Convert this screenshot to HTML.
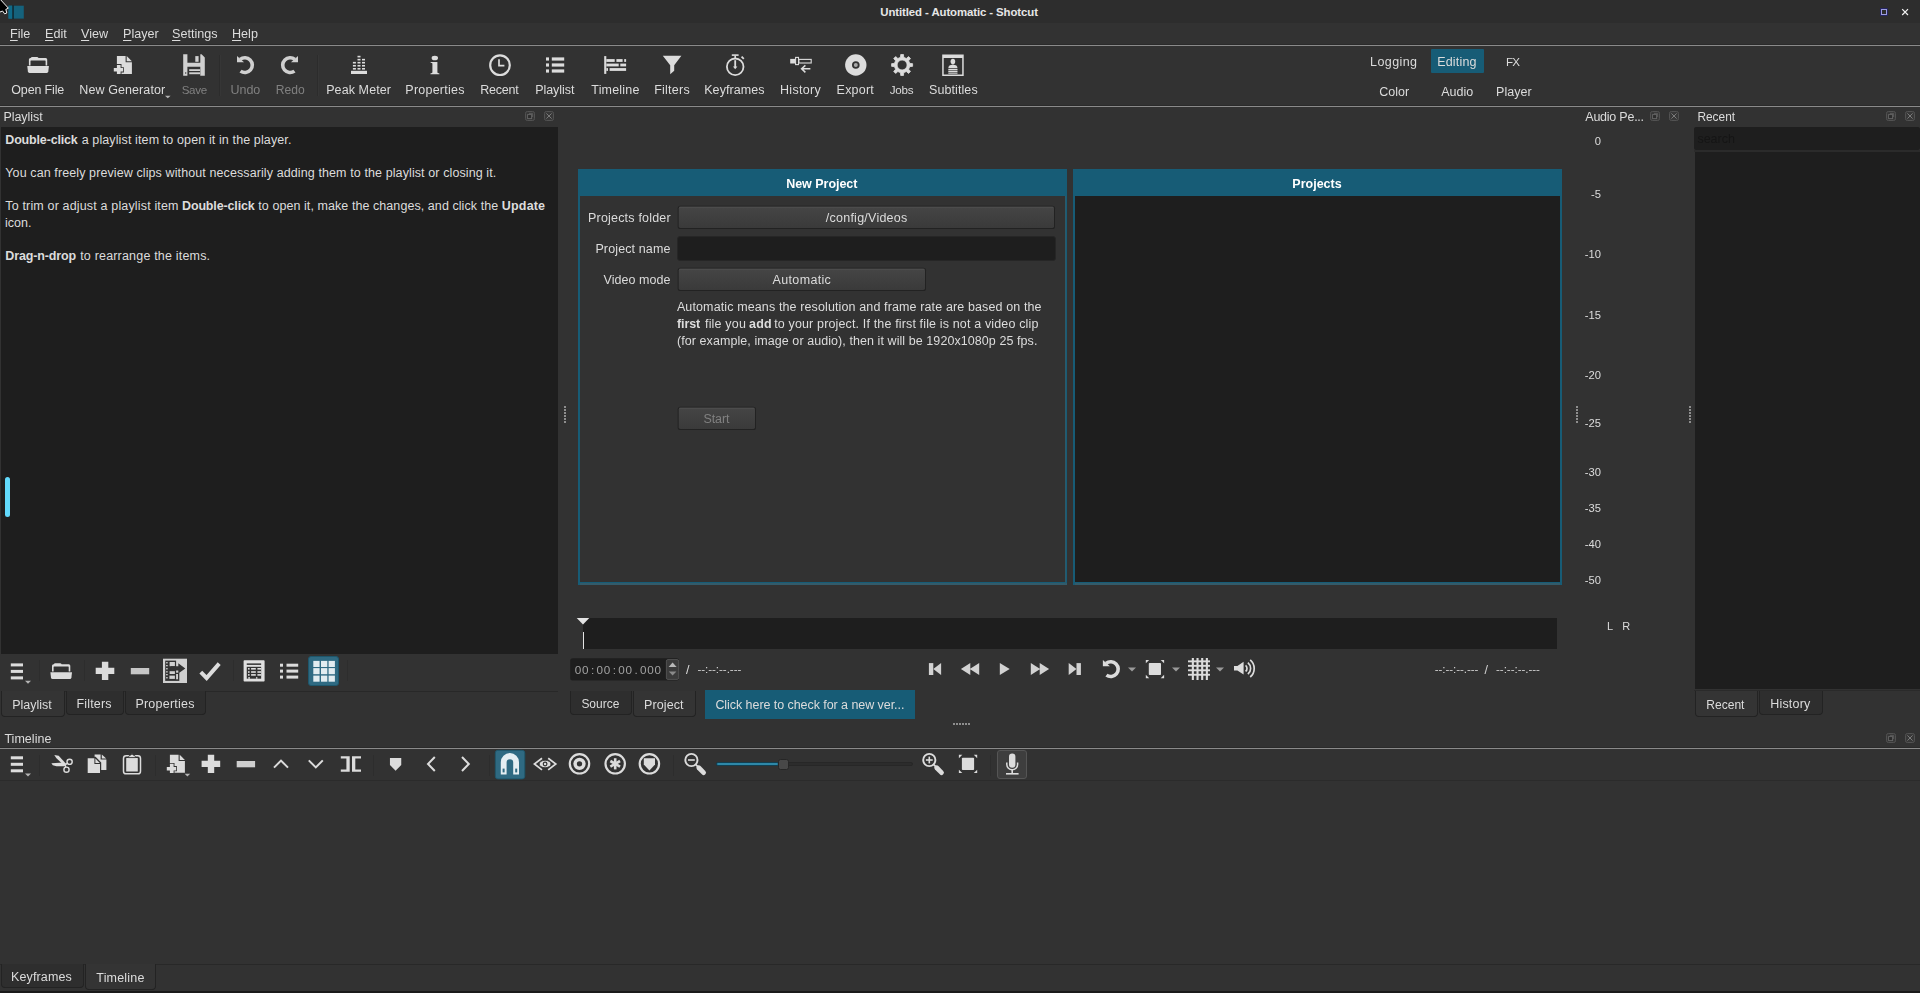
<!DOCTYPE html>
    <html lang="en"><head><meta charset="utf-8"><title>Untitled - Automatic - Shotcut</title>
    <style>
    html,body{margin:0;padding:0;}
    body{width:1920px;height:993px;overflow:hidden;background:#323232;font-family:"Liberation Sans",sans-serif;font-size:12.5px;color:#dcdcdc;position:relative;}
    #app{filter:grayscale(0);position:absolute;left:0;top:0;width:1920px;height:993px;overflow:hidden;}
    #app div,#app svg{position:absolute;box-sizing:border-box;}
    #app svg{overflow:visible;}
    .t{white-space:nowrap;}
    u{text-decoration:underline;text-underline-offset:2px;text-decoration-thickness:1px;}
    </style></head><body><div id="app">
    <div style="left:0px;top:0px;width:1920px;height:23px;background:#2d2d2d;"></div>
<div class="t" style="top:7.12px;font-size:11.4px;color:#e6e6e6;line-height:1;font-weight:bold;letter-spacing:-0.091px;left:880.30px;">Untitled - Automatic - Shotcut</div>
<div class="t" style="top:28.03px;font-size:12.6px;color:#dcdcdc;line-height:1;left:10.00px;"><u>F</u>ile</div>
<div class="t" style="top:28.03px;font-size:12.6px;color:#dcdcdc;line-height:1;left:45.00px;"><u>E</u>dit</div>
<div class="t" style="top:28.03px;font-size:12.6px;color:#dcdcdc;line-height:1;left:81.00px;"><u>V</u>iew</div>
<div class="t" style="top:28.03px;font-size:12.6px;color:#dcdcdc;line-height:1;left:123.00px;"><u>P</u>layer</div>
<div class="t" style="top:28.03px;font-size:12.6px;color:#dcdcdc;line-height:1;left:172.00px;"><u>S</u>ettings</div>
<div class="t" style="top:28.03px;font-size:12.6px;color:#dcdcdc;line-height:1;left:232.00px;"><u>H</u>elp</div>
<div style="left:0px;top:44px;width:1920px;height:1px;background:#2a2a2a;"></div>
<div style="left:0px;top:45px;width:1920px;height:1px;background:#8a8a8a;"></div>
<div class="t" style="top:84.02px;font-size:12.5px;color:#dcdcdc;line-height:1;letter-spacing:-0.155px;left:11.30px;">Open File</div>
<div class="t" style="top:84.02px;font-size:12.5px;color:#dcdcdc;line-height:1;letter-spacing:0.092px;left:79.30px;">New Generator</div>
<div class="t" style="top:84.03px;font-size:11.62px;color:#808080;line-height:1;letter-spacing:-0.347px;left:181.70px;">Save</div>
<div class="t" style="top:84.02px;font-size:12.5px;color:#808080;line-height:1;letter-spacing:-0.044px;left:230.50px;">Undo</div>
<div class="t" style="top:84.02px;font-size:12.1px;color:#808080;line-height:1;left:275.73px;">Redo</div>
<div class="t" style="top:84.02px;font-size:12.5px;color:#dcdcdc;line-height:1;letter-spacing:0.094px;left:326.20px;">Peak Meter</div>
<div class="t" style="top:84.02px;font-size:12.5px;color:#dcdcdc;line-height:1;letter-spacing:0.242px;left:405.30px;">Properties</div>
<div class="t" style="top:84.02px;font-size:12.5px;color:#dcdcdc;line-height:1;letter-spacing:-0.247px;left:480.30px;">Recent</div>
<div class="t" style="top:84.02px;font-size:12.5px;color:#dcdcdc;line-height:1;letter-spacing:-0.046px;left:535.20px;">Playlist</div>
<div class="t" style="top:84.02px;font-size:12.5px;color:#dcdcdc;line-height:1;letter-spacing:0.183px;left:591.30px;">Timeline</div>
<div class="t" style="top:84.02px;font-size:12.5px;color:#dcdcdc;line-height:1;letter-spacing:0.237px;left:654.20px;">Filters</div>
<div class="t" style="top:84.02px;font-size:12.5px;color:#dcdcdc;line-height:1;letter-spacing:0.076px;left:704.20px;">Keyframes</div>
<div class="t" style="top:84.02px;font-size:12.5px;color:#dcdcdc;line-height:1;letter-spacing:0.293px;left:780.00px;">History</div>
<div class="t" style="top:84.02px;font-size:12.5px;color:#dcdcdc;line-height:1;letter-spacing:0.209px;left:836.60px;">Export</div>
<div class="t" style="top:84.03px;font-size:11.62px;color:#dcdcdc;line-height:1;letter-spacing:-0.241px;left:889.70px;">Jobs</div>
<div class="t" style="top:84.02px;font-size:12.5px;color:#dcdcdc;line-height:1;letter-spacing:0.076px;left:929.10px;">Subtitles</div>
<div style="left:219px;top:55px;width:1px;height:41px;background:#2c2c2c;"></div>
<div style="left:220px;top:55px;width:1px;height:41px;background:#363636;"></div>
<div style="left:317px;top:55px;width:1px;height:41px;background:#2c2c2c;"></div>
<div style="left:318px;top:55px;width:1px;height:41px;background:#363636;"></div>
<div style="left:1430.5px;top:49px;width:53.5px;height:24px;background:#175c76;border-radius:1px;"></div>
<div class="t" style="top:56.02px;font-size:12.5px;color:#dcdcdc;line-height:1;letter-spacing:0.394px;left:1370.10px;">Logging</div>
<div class="t" style="top:56.02px;font-size:12.5px;color:#dcdcdc;line-height:1;letter-spacing:0.189px;left:1437.20px;">Editing</div>
<div class="t" style="top:56.03px;font-size:11.62px;color:#dcdcdc;line-height:1;letter-spacing:-0.841px;left:1506.07px;">FX</div>
<div class="t" style="top:86.02px;font-size:12.5px;color:#dcdcdc;line-height:1;letter-spacing:-0.027px;left:1379.30px;">Color</div>
<div class="t" style="top:86.02px;font-size:12.5px;color:#dcdcdc;line-height:1;letter-spacing:-0.005px;left:1441.20px;">Audio</div>
<div class="t" style="top:86.02px;font-size:12.5px;color:#dcdcdc;line-height:1;letter-spacing:0.026px;left:1496.10px;">Player</div>
<div style="left:0px;top:105px;width:1920px;height:1px;background:#2a2a2a;"></div>
<div style="left:0px;top:106px;width:1920px;height:1px;background:#8a8a8a;"></div>
<div class="t" style="top:111.02px;font-size:12.5px;color:#dcdcdc;line-height:1;letter-spacing:-0.053px;left:3.40px;">Playlist</div>
<div style="left:1px;top:127px;width:557px;height:527px;background:#1e1e1e;"></div>
<div class="t" style="top:134.02px;font-size:12.5px;color:#dcdcdc;line-height:1;font-weight:bold;letter-spacing:-0.17px;left:5.30px;">Double-click</div>
<div class="t" style="top:134.02px;font-size:12.5px;color:#dcdcdc;line-height:1;letter-spacing:0.12px;left:81.65px;">a playlist item to open it in the player.</div>
<div class="t" style="top:167.02px;font-size:12.5px;color:#dcdcdc;line-height:1;letter-spacing:0.103px;left:5.30px;">You can freely preview clips without necessarily adding them to the playlist or closing it.</div>
<div class="t" style="top:200.02px;font-size:12.5px;color:#dcdcdc;line-height:1;letter-spacing:0.159px;left:5.30px;">To trim or adjust a playlist item</div>
<div class="t" style="top:200.02px;font-size:12.5px;color:#dcdcdc;line-height:1;font-weight:bold;letter-spacing:-0.143px;left:182.00px;">Double-click</div>
<div class="t" style="top:200.02px;font-size:12.5px;color:#dcdcdc;line-height:1;letter-spacing:0.069px;left:258.30px;">to open it, make the changes, and click the</div>
<div class="t" style="top:200.02px;font-size:12.5px;color:#dcdcdc;line-height:1;font-weight:bold;letter-spacing:0.177px;left:501.80px;">Update</div>
<div class="t" style="top:217.02px;font-size:12.5px;color:#dcdcdc;line-height:1;left:5.00px;">icon.</div>
<div class="t" style="top:250.02px;font-size:12.5px;color:#dcdcdc;line-height:1;font-weight:bold;letter-spacing:-0.128px;left:5.30px;">Drag-n-drop</div>
<div class="t" style="top:250.02px;font-size:12.5px;color:#dcdcdc;line-height:1;letter-spacing:0.187px;left:80.20px;">to rearrange the items.</div>
<div style="left:5px;top:477px;width:5px;height:40px;background:#62dafc;border-radius:2.5px;"></div>
<div style="left:39px;top:660px;width:1px;height:21px;background:#2d2d2d;"></div>
<div style="left:84px;top:660px;width:1px;height:21px;background:#2d2d2d;"></div>
<div style="left:233px;top:660px;width:1px;height:21px;background:#2d2d2d;"></div>
<div style="left:347px;top:660px;width:1px;height:21px;background:#2d2d2d;"></div>
<div style="left:308px;top:656px;width:31px;height:30px;background:#2f6a82;border:1px solid #1d566b;border-radius:3px;"></div>
<div style="left:65px;top:691px;width:493px;height:1px;background:#282828;"></div>
<div style="left:1px;top:691px;width:64px;height:26px;background:#343434;border:1px solid #232323;border-top:none;border-radius:0 0 4px 4px;"></div>
<div class="t" style="top:699.02px;font-size:12.5px;color:#dcdcdc;line-height:1;letter-spacing:-0.017px;left:12.20px;">Playlist</div>
<div style="left:66px;top:691px;width:58px;height:24px;background:#2e2e2e;border:1px solid #232323;border-top:none;border-radius:0 0 4px 4px;"></div>
<div class="t" style="top:698.02px;font-size:12.5px;color:#dcdcdc;line-height:1;letter-spacing:0.137px;left:76.60px;">Filters</div>
<div style="left:125px;top:691px;width:81px;height:24px;background:#2e2e2e;border:1px solid #232323;border-top:none;border-radius:0 0 4px 4px;"></div>
<div class="t" style="top:698.02px;font-size:12.5px;color:#dcdcdc;line-height:1;letter-spacing:0.242px;left:135.40px;">Properties</div>
<div style="left:578px;top:168.5px;width:489px;height:416.5px;background:#175c76;"></div>
<div style="left:580px;top:196px;width:484.5px;height:386.2px;background:#323232;"></div>
<div style="left:580px;top:583px;width:487px;height:2px;background:#335b6a;"></div>
<div style="left:1064.8px;top:196px;width:1.6px;height:388px;background:#2c5a6b;"></div>
<div class="t" style="top:178.02px;font-size:12.5px;color:#ffffff;line-height:1;font-weight:bold;letter-spacing:-0.029px;left:786.20px;">New Project</div>
<div style="left:1073px;top:168.5px;width:489px;height:416.5px;background:#175c76;"></div>
<div style="left:1075.2px;top:196px;width:484.8px;height:386.2px;background:#1e1e1e;"></div>
<div style="left:1075px;top:583px;width:485px;height:2px;background:#335b6a;"></div>
<div class="t" style="top:178.02px;font-size:12.5px;color:#ffffff;line-height:1;font-weight:bold;left:1317.00px;transform:translateX(-50%);">Projects</div>
<div class="t" style="top:212.02px;font-size:12.5px;color:#dcdcdc;line-height:1;letter-spacing:0.198px;left:588.00px;">Projects folder</div>
<div class="t" style="top:243.02px;font-size:12.5px;color:#dcdcdc;line-height:1;letter-spacing:0.128px;left:595.40px;">Project name</div>
<div class="t" style="top:274.02px;font-size:12.5px;color:#dcdcdc;line-height:1;letter-spacing:0.052px;left:603.50px;">Video mode</div>
<svg style="left:0;top:0" width="1920" height="993"><defs><linearGradient id="bg677205" x1="0" y1="0" x2="0" y2="1"><stop offset="0" stop-color="#454545"/><stop offset="1" stop-color="#3a3a3a"/></linearGradient></defs><rect x="677.7" y="205.7" width="377.3" height="23.3" rx="2.6" fill="#222"/><rect x="678.7" y="206.7" width="375.3" height="21.3" rx="1.8" fill="url(#bg677205)"/><rect x="679.2" y="206.7" width="374.3" height="1" fill="#525252" opacity="0.8"/></svg>
<div class="t" style="top:212.02px;font-size:12.5px;color:#dcdcdc;line-height:1;letter-spacing:0.243px;left:825.80px;">/config/Videos</div>
<div style="left:677px;top:236px;width:379px;height:25px;background:#1e1e1e;border:1px solid #262626;border-radius:3px;"></div>
<svg style="left:0;top:0" width="1920" height="993"><defs><linearGradient id="bg677267" x1="0" y1="0" x2="0" y2="1"><stop offset="0" stop-color="#454545"/><stop offset="1" stop-color="#3a3a3a"/></linearGradient></defs><rect x="677.7" y="267.7" width="248.3" height="23.3" rx="2.6" fill="#222"/><rect x="678.7" y="268.7" width="246.3" height="21.3" rx="1.8" fill="url(#bg677267)"/><rect x="679.2" y="268.7" width="245.3" height="1" fill="#525252" opacity="0.8"/></svg>
<div class="t" style="top:274.02px;font-size:12.5px;color:#dcdcdc;line-height:1;letter-spacing:0.334px;left:772.60px;">Automatic</div>
<div class="t" style="top:301.02px;font-size:12.5px;color:#dcdcdc;line-height:1;letter-spacing:0.123px;left:676.90px;">Automatic means the resolution and frame rate are based on the</div>
<div class="t" style="top:318.02px;font-size:12.5px;color:#dcdcdc;line-height:1;font-weight:bold;letter-spacing:-0.063px;left:676.90px;">first</div>
<div class="t" style="top:318.02px;font-size:12.5px;color:#dcdcdc;line-height:1;letter-spacing:0.178px;left:705.00px;">file you</div>
<div class="t" style="top:318.02px;font-size:12.5px;color:#dcdcdc;line-height:1;font-weight:bold;letter-spacing:0.156px;left:749.10px;">add</div>
<div class="t" style="top:318.02px;font-size:12.5px;color:#dcdcdc;line-height:1;letter-spacing:0.147px;left:774.20px;">to your project. If the first file is not a video clip</div>
<div class="t" style="top:335.02px;font-size:12.5px;color:#dcdcdc;line-height:1;letter-spacing:0.072px;left:677.00px;">(for example, image or audio), then it will be 1920x1080p 25 fps.</div>
<svg style="left:0;top:0" width="1920" height="993"><defs><linearGradient id="bg677406" x1="0" y1="0" x2="0" y2="1"><stop offset="0" stop-color="#454545"/><stop offset="1" stop-color="#3a3a3a"/></linearGradient></defs><rect x="677.7" y="406.7" width="78.3" height="23.3" rx="2.6" fill="#222"/><rect x="678.7" y="407.7" width="76.3" height="21.3" rx="1.8" fill="url(#bg677406)"/><rect x="679.2" y="407.7" width="75.3" height="1" fill="#525252" opacity="0.8"/></svg>
<div class="t" style="top:413.02px;font-size:12.5px;color:#808080;line-height:1;letter-spacing:-0.056px;left:703.40px;">Start</div>
<div style="left:583px;top:618px;width:974px;height:31px;background:#1e1e1e;"></div>
<div style="left:583px;top:632px;width:1.4px;height:17px;background:#e4e4e4;"></div>
<svg style="left:0;top:0" width="1920" height="993"><rect x="570.2" y="658.3" width="108.8" height="22.3" rx="2.5" fill="#1e1e1e"/><rect x="666.4" y="659.6" width="12.2" height="19.8" rx="1.5" fill="#3b3b3b" stroke="#565656" stroke-width="0.9"/></svg>
<div class="t" style="top:664.23px;font-size:11.7px;color:#a2a2a2;line-height:1;left:574.40px;"><span style="display:inline-block;width:7.26px;text-align:center">0</span><span style="display:inline-block;width:7.26px;text-align:center">0</span><span style="display:inline-block;width:7.26px;text-align:center">:</span><span style="display:inline-block;width:7.26px;text-align:center">0</span><span style="display:inline-block;width:7.26px;text-align:center">0</span><span style="display:inline-block;width:7.26px;text-align:center">:</span><span style="display:inline-block;width:7.26px;text-align:center">0</span><span style="display:inline-block;width:7.26px;text-align:center">0</span><span style="display:inline-block;width:7.26px;text-align:center">.</span><span style="display:inline-block;width:7.26px;text-align:center">0</span><span style="display:inline-block;width:7.26px;text-align:center">0</span><span style="display:inline-block;width:7.26px;text-align:center">0</span></div>
<div class="t" style="top:664.02px;font-size:12.5px;color:#dcdcdc;line-height:1;left:686.00px;">/</div>
<div class="t" style="top:663.03px;font-size:11.62px;color:#d2d2d2;line-height:1;letter-spacing:-0.044px;left:697.40px;">--:--:--.---</div>
<div class="t" style="top:663.03px;font-size:11.62px;color:#d2d2d2;line-height:1;letter-spacing:-0.071px;left:1434.70px;">--:--:--.---</div>
<div class="t" style="top:664.02px;font-size:12.5px;color:#d2d2d2;line-height:1;left:1484.60px;">/</div>
<div class="t" style="top:663.03px;font-size:11.62px;color:#d2d2d2;line-height:1;letter-spacing:-0.044px;left:1496.00px;">--:--:--.---</div>
<div style="left:570px;top:691px;width:62px;height:24px;background:#2e2e2e;border:1px solid #232323;border-top:none;border-radius:0 0 4px 4px;"></div>
<div class="t" style="top:698.03px;font-size:11.98px;color:#dcdcdc;line-height:1;left:581.40px;">Source</div>
<div style="left:633px;top:691px;width:62.5px;height:26px;background:#343434;border:1px solid #232323;border-top:none;border-radius:0 0 4px 4px;"></div>
<div class="t" style="top:699.02px;font-size:12.5px;color:#dcdcdc;line-height:1;letter-spacing:0.095px;left:644.10px;">Project</div>
<div style="left:705px;top:690px;width:210px;height:29px;background:#175c76;"></div>
<div class="t" style="top:699.02px;font-size:12.5px;color:#dcdcdc;line-height:1;letter-spacing:-0.059px;left:715.40px;">Click here to check for a new ver...</div>
<div class="t" style="top:111.02px;font-size:12.5px;color:#dcdcdc;line-height:1;letter-spacing:-0.238px;left:1585.30px;">Audio Pe...</div>
<div class="t" style="top:136.03px;font-size:11.2px;color:#dcdcdc;line-height:1;right:319.00px;">0</div>
<div class="t" style="top:189.03px;font-size:11.2px;color:#dcdcdc;line-height:1;right:319.00px;">-5</div>
<div class="t" style="top:249.03px;font-size:11.2px;color:#dcdcdc;line-height:1;right:319.00px;">-10</div>
<div class="t" style="top:310.03px;font-size:11.2px;color:#dcdcdc;line-height:1;right:319.00px;">-15</div>
<div class="t" style="top:370.03px;font-size:11.2px;color:#dcdcdc;line-height:1;right:319.00px;">-20</div>
<div class="t" style="top:418.03px;font-size:11.2px;color:#dcdcdc;line-height:1;right:319.00px;">-25</div>
<div class="t" style="top:467.03px;font-size:11.2px;color:#dcdcdc;line-height:1;right:319.00px;">-30</div>
<div class="t" style="top:503.03px;font-size:11.2px;color:#dcdcdc;line-height:1;right:319.00px;">-35</div>
<div class="t" style="top:539.03px;font-size:11.2px;color:#dcdcdc;line-height:1;right:319.00px;">-40</div>
<div class="t" style="top:575.03px;font-size:11.2px;color:#dcdcdc;line-height:1;right:319.00px;">-50</div>
<div class="t" style="top:621.03px;font-size:11px;color:#dcdcdc;line-height:1;left:1607.00px;">L</div>
<div class="t" style="top:621.03px;font-size:11px;color:#dcdcdc;line-height:1;left:1622.30px;">R</div>
<div class="t" style="top:112.03px;font-size:11.88px;color:#dcdcdc;line-height:1;left:1697.45px;">Recent</div>
<div style="left:1694px;top:127px;width:226px;height:23px;background:#1e1e1e;border-radius:2px;"></div>
<div style="left:1695px;top:152px;width:225px;height:537px;background:#1e1e1e;"></div>
<div style="left:1694px;top:150px;width:226px;height:2px;background:#2b2b2b;"></div>
<div class="t" style="top:133.02px;font-size:12.5px;color:#151515;line-height:1;left:1697.40px;">search</div>
<div style="left:1694px;top:690px;width:226px;height:1px;background:#2a2a2a;"></div>
<div style="left:1695px;top:691px;width:63px;height:26px;background:#343434;border:1px solid #232323;border-top:none;border-radius:0 0 4px 4px;"></div>
<div class="t" style="top:699.03px;font-size:12.06px;color:#dcdcdc;line-height:1;left:1706.29px;">Recent</div>
<div style="left:1759px;top:691px;width:64px;height:24px;background:#2e2e2e;border:1px solid #232323;border-top:none;border-radius:0 0 4px 4px;"></div>
<div class="t" style="top:698.02px;font-size:12.5px;color:#dcdcdc;line-height:1;letter-spacing:0.185px;left:1770.25px;">History</div>
<div class="t" style="top:733.02px;font-size:12.5px;color:#dcdcdc;line-height:1;letter-spacing:0.04px;left:4.40px;">Timeline</div>
<div style="left:0px;top:747px;width:1920px;height:1px;background:#2a2a2a;"></div>
<div style="left:0px;top:748px;width:1920px;height:1px;background:#8a8a8a;"></div>
<div style="left:0px;top:780px;width:1920px;height:1px;background:#2b2b2b;"></div>
<div style="left:39px;top:755px;width:1px;height:21px;background:#2d2d2d;"></div>
<div style="left:155px;top:755px;width:1px;height:21px;background:#2d2d2d;"></div>
<div style="left:373px;top:755px;width:1px;height:21px;background:#2d2d2d;"></div>
<div style="left:489px;top:755px;width:1px;height:21px;background:#2d2d2d;"></div>
<div style="left:673px;top:755px;width:1px;height:21px;background:#2d2d2d;"></div>
<div style="left:990px;top:755px;width:1px;height:21px;background:#2d2d2d;"></div>
<svg style="left:0;top:0" width="1920" height="993"><rect x="495.3" y="750.3" width="29.5" height="28.6" rx="2.6" fill="#2f6a82" stroke="#1d566b" stroke-width="0.9"/></svg>
<div style="left:997px;top:750px;width:30px;height:29px;background:#3e3e3e;border:1px solid #555;border-radius:3px;"></div>
<div style="left:716px;top:762px;width:197px;height:4px;background:#2c2c2c;border:1px solid #272727;border-radius:2px;"></div>
<div style="left:716px;top:762px;width:63px;height:4px;background:#2e88a8;border:1px solid #123f50;border-radius:2px;"></div>
<div style="left:778px;top:759px;width:11px;height:11px;background:#484848;border:1px solid #262626;border-radius:2.5px;"></div>
<div style="left:0px;top:964px;width:1920px;height:1px;background:#282828;"></div>
<div style="left:1px;top:964px;width:83px;height:24px;background:#2e2e2e;border:1px solid #232323;border-top:none;border-radius:0 0 4px 4px;"></div>
<div class="t" style="top:971.02px;font-size:12.5px;color:#dcdcdc;line-height:1;letter-spacing:0.114px;left:11.10px;">Keyframes</div>
<div style="left:85px;top:964px;width:71px;height:26px;background:#343434;border:1px solid #232323;border-top:none;border-radius:0 0 4px 4px;"></div>
<div class="t" style="top:972.33px;font-size:12.5px;color:#dcdcdc;line-height:1;letter-spacing:0.183px;left:96.30px;">Timeline</div>
<div style="left:0px;top:991px;width:1920px;height:2px;background:#1a1a1a;"></div>
<svg style="left:0;top:0;" width="1920" height="993" viewBox="0 0 1920 993"><rect x="8.5" y="5.7" width="15.3" height="12.9" fill="#15627c" rx="0" /><rect x="8.5" y="5.7" width="3.8" height="12.9" fill="#0f6a88" rx="0" /><rect x="12.3" y="5.2" width="1.5" height="13.9" fill="#10262e" rx="0" /><path d="M-1 -2 L8.4 8.2 L5.8 9.4 L6.8 13 L4.6 13.8 L2.6 11 L-1 12.4 Z" fill="#000" stroke="#f4f4f4" stroke-width="1" /><rect x="1880.6" y="8.6" width="6.8" height="6.8" fill="none" stroke="#25256e" stroke-width="0.8"/><rect x="1881.5" y="9.5" width="5" height="5" fill="none" stroke="#9c9ce0" stroke-width="1"/><path d="M1902.2 9.2 l5.8 5.8 M1908 9.2 l-5.8 5.8" fill="none" stroke="#f2f2f2" stroke-width="1.2" /><g transform="translate(27.3,57)"><path d="M1.6 8.4 V2.6 Q1.6 1.1 3.1 1.1 H3.4 Q3.7 0 5 0 H9.6 Q10.9 0 11.2 1.1 H18.4 Q19.9 1.1 19.9 2.6 V8.4 H18.3 V3.9 Q18.3 3.4 17.8 3.4 H3.7 Q3.2 3.4 3.2 3.9 V8.4 Z" fill="#dcdcdc" stroke="none" stroke-width="0" /><path d="M0 9.1 H21.6 L21 14.6 Q20.8 15.9 19.5 15.9 H2.1 Q0.8 15.9 0.6 14.6 Z" fill="#dcdcdc" stroke="none" stroke-width="0" /></g><g transform="translate(113.8,56)"><path d="M3.1 0 H11.8 V6.2 H18.1 V18 H7.7 V16.5 H10.1 V11.2 H7.7 V8.1 H3.1 Z" fill="#dcdcdc" stroke="none" stroke-width="0" /><path d="M12.9 0 L18.1 5.2 H12.9 Z" fill="#dcdcdc" stroke="none" stroke-width="0" /><path d="M3.1 9 H6.8 V12.1 H9.3 V15.6 H6.8 V18.1 H3.1 V15.6 H0 V12.1 H3.1 Z" fill="#dcdcdc" stroke="none" stroke-width="0" /></g><path d="M165 95.7 h5.6 l-2.8 2.6 z" fill="#b4b4b4" stroke="none" stroke-width="0" /><path d="M183.2 54.3 H187.4 V62.7 H200.3 V54.3 H201.6 L204.8 57.5 V75.7 H200.3 V66.8 H187.4 V75.7 H183.2 Z" fill="#d0d0d0" stroke="none" stroke-width="0" /><rect x="195.3" y="56.1" width="3.3" height="5.7" fill="#d0d0d0" rx="0" /><rect x="189.2" y="69.2" width="10.9" height="1.8" fill="#d0d0d0" rx="0" /><rect x="189.2" y="72.3" width="10.9" height="1.9" fill="#d0d0d0" rx="0" /><circle cx="185.7" cy="73" r="0.7" fill="#323232" stroke="none" stroke-width="0"/><g transform="translate(244.9,65.1) scale(1,1)"><path d="M-4.76 -5.67 A7.4 7.4 0 1 1 -4.35 5.99" fill="none" stroke="#d0d0d0" stroke-width="3.6" /><path d="M-7.9 -9.1 V-2.9 H-0.9 Z" fill="#d0d0d0" stroke="none" stroke-width="0" /></g><g transform="translate(290.1,65.1) scale(-1,1)"><path d="M-4.76 -5.67 A7.4 7.4 0 1 1 -4.35 5.99" fill="none" stroke="#d0d0d0" stroke-width="3.6" /><path d="M-7.9 -9.1 V-2.9 H-0.9 Z" fill="#d0d0d0" stroke="none" stroke-width="0" /></g><rect x="351" y="70.8" width="16" height="3.2" fill="#dcdcdc" rx="0" /><rect x="352.9" y="68.0" width="3" height="1.6" fill="#dcdcdc" rx="0" /><rect x="352.9" y="64.95" width="3" height="1.6" fill="#dcdcdc" rx="0" /><rect x="352.9" y="61.9" width="3" height="1.6" fill="#dcdcdc" rx="0" /><rect x="357.5" y="68.0" width="3" height="1.6" fill="#dcdcdc" rx="0" /><rect x="357.5" y="64.95" width="3" height="1.6" fill="#dcdcdc" rx="0" /><rect x="357.5" y="61.9" width="3" height="1.6" fill="#dcdcdc" rx="0" /><rect x="357.5" y="58.85" width="3" height="1.6" fill="#dcdcdc" rx="0" /><rect x="357.5" y="55.8" width="3" height="1.6" fill="#dcdcdc" rx="0" /><rect x="362.0" y="68.0" width="3" height="1.6" fill="#dcdcdc" rx="0" /><rect x="362.0" y="64.95" width="3" height="1.6" fill="#dcdcdc" rx="0" /><rect x="362.0" y="61.9" width="3" height="1.6" fill="#dcdcdc" rx="0" /><rect x="362.0" y="58.85" width="3" height="1.6" fill="#dcdcdc" rx="0" /><ellipse cx="434.8" cy="58" rx="3.2" ry="2.3" fill="#dcdcdc"/><path d="M430.6 62 H437.4 V72.6 Q437.4 73.2 439.4 73.4 V74.2 H430.4 V73.4 Q432.4 73.2 432.4 72.6 V63.6 Q432.4 63 430.6 62.8 Z" fill="#dcdcdc" stroke="none" stroke-width="0" /><circle cx="500" cy="65.2" r="9.8" fill="none" stroke="#dcdcdc" stroke-width="2.2"/><path d="M499 59.3 V65.6 H504.4" fill="none" stroke="#dcdcdc" stroke-width="1.7" /><rect x="546" y="57.4" width="3" height="3.2" fill="#dcdcdc" rx="0" /><rect x="551.8" y="57.4" width="12.4" height="3.2" fill="#dcdcdc" rx="0" /><rect x="546" y="63.4" width="3" height="3.2" fill="#dcdcdc" rx="0" /><rect x="551.8" y="63.4" width="12.4" height="3.2" fill="#dcdcdc" rx="0" /><rect x="546" y="69.4" width="3" height="3.2" fill="#dcdcdc" rx="0" /><rect x="551.8" y="69.4" width="12.4" height="3.2" fill="#dcdcdc" rx="0" /><rect x="604.2" y="56.1" width="2.1" height="17.8" fill="#dcdcdc" rx="0" /><rect x="606.3" y="59.1" width="8.400000000000091" height="2.8" fill="#dcdcdc" rx="0" /><rect x="616.4" y="59.1" width="6.2000000000000455" height="2.8" fill="#dcdcdc" rx="0" /><rect x="624.2" y="59.1" width="1.8999999999999773" height="2.8" fill="#dcdcdc" rx="0" /><rect x="606.3" y="63.6" width="12.400000000000091" height="2.8" fill="#dcdcdc" rx="0" /><rect x="620.3" y="63.6" width="5.800000000000068" height="2.8" fill="#dcdcdc" rx="0" /><rect x="606.3" y="68.1" width="1.7000000000000455" height="2.8" fill="#dcdcdc" rx="0" /><rect x="609.6" y="68.1" width="16.5" height="2.8" fill="#dcdcdc" rx="0" /><path d="M662.8 55.8 H681.4 L674.2 65.2 V70.8 L670.2 74.2 V65.2 Z" fill="#dcdcdc" stroke="none" stroke-width="0" /><circle cx="735.2" cy="66.8" r="8.3" fill="none" stroke="#dcdcdc" stroke-width="1.8"/><rect x="731.8" y="54.3" width="6.8" height="1.6" fill="#dcdcdc" rx="0" /><rect x="734.4" y="55.6" width="1.6" height="2.8" fill="#dcdcdc" rx="0" /><path d="M741.6 56.6 L743.8 58.8" fill="none" stroke="#dcdcdc" stroke-width="1.8" /><rect x="734.3" y="60.2" width="1.8" height="7" fill="#dcdcdc" rx="0" /><path d="M733 66.4 h4.4 l-2.2 2.8 z" fill="#dcdcdc" stroke="none" stroke-width="0" /><rect x="790.2" y="58.9" width="5.4" height="4.6" fill="#dcdcdc" rx="0" /><rect x="795.6" y="57.4" width="2.9" height="7.2" fill="none" stroke="#dcdcdc" stroke-width="1.1"/><rect x="798.9" y="59.4" width="12.3" height="3.6" fill="none" stroke="#dcdcdc" stroke-width="1.1"/><path d="M810.4 68.8 H802 M805.4 65.4 L801.6 68.8 L805.4 72.4" fill="none" stroke="#dcdcdc" stroke-width="1.5" /><circle cx="855.8" cy="65" r="10.7" fill="#dcdcdc" stroke="none" stroke-width="0"/><circle cx="855.8" cy="65" r="3.8" fill="#323232" stroke="none" stroke-width="0"/><circle cx="855.8" cy="65" r="2" fill="#a8a8a8" stroke="none" stroke-width="0"/><path d="M900.47 57.37 L900.73 54.49 L903.47 54.49 L903.73 57.37 L906.34 58.46 L908.56 56.60 L910.50 58.54 L908.64 60.76 L909.73 63.37 L912.61 63.63 L912.61 66.37 L909.73 66.63 L908.64 69.24 L910.50 71.46 L908.56 73.40 L906.34 71.54 L903.73 72.63 L903.47 75.51 L900.73 75.51 L900.47 72.63 L897.86 71.54 L895.64 73.40 L893.70 71.46 L895.56 69.24 L894.47 66.63 L891.59 66.37 L891.59 63.63 L894.47 63.37 L895.56 60.76 L893.70 58.54 L895.64 56.60 L897.86 58.46 Z M907.1 65 A5 5 0 1 0 897.1 65 A5 5 0 1 0 907.1 65 Z" fill="#dcdcdc" stroke="#dcdcdc" stroke-width="0.8" fill-rule="evenodd" stroke-linejoin="round"/><path d="M942.2 54.4 H963.7 V75.9 H942.2 Z M943.7 58 V74.4 H962.2 V58 Z" fill="#dcdcdc" stroke="none" stroke-width="0" fill-rule="evenodd"/><ellipse cx="952.9" cy="61.6" rx="2.3" ry="2.8" fill="#dcdcdc"/><path d="M948.3 68.2 Q948.3 64.8 952.9 64.8 Q957.5 64.8 957.5 68.2 Z" fill="#dcdcdc" stroke="none" stroke-width="0" /><rect x="948.3" y="69" width="9.2" height="1.4" fill="#dcdcdc" rx="0" /><rect x="948.3" y="71" width="9.2" height="1.2" fill="#dcdcdc" rx="0" /><rect x="948.3" y="72.7" width="9.2" height="1" fill="#dcdcdc" rx="0" /><rect x="525.5" y="111.5" width="9" height="9" rx="1.8" fill="#383838" stroke="#525252" stroke-width="1"/><rect x="544.5" y="111.5" width="9" height="9" rx="1.8" fill="#383838" stroke="#525252" stroke-width="1"/><rect x="527.6" y="114.6" width="4" height="4" fill="#2c2c2c" stroke="#666" stroke-width="0.9"/><path d="M529 113.4 h3.6 v3.6" fill="none" stroke="#5c5c5c" stroke-width="0.9" /><path d="M546.4 113.4 l5.2 5.2 M551.6 113.4 l-5.2 5.2" fill="none" stroke="#7a7a7a" stroke-width="1" /><rect x="1650.5" y="111.5" width="9" height="9" rx="1.8" fill="#383838" stroke="#525252" stroke-width="1"/><rect x="1669.5" y="111.5" width="9" height="9" rx="1.8" fill="#383838" stroke="#525252" stroke-width="1"/><rect x="1652.6" y="114.6" width="4" height="4" fill="#2c2c2c" stroke="#666" stroke-width="0.9"/><path d="M1654 113.4 h3.6 v3.6" fill="none" stroke="#5c5c5c" stroke-width="0.9" /><path d="M1671.4 113.4 l5.2 5.2 M1676.6 113.4 l-5.2 5.2" fill="none" stroke="#7a7a7a" stroke-width="1" /><rect x="1886.5" y="111.5" width="9" height="9" rx="1.8" fill="#383838" stroke="#525252" stroke-width="1"/><rect x="1905.5" y="111.5" width="9" height="9" rx="1.8" fill="#383838" stroke="#525252" stroke-width="1"/><rect x="1888.6" y="114.6" width="4" height="4" fill="#2c2c2c" stroke="#666" stroke-width="0.9"/><path d="M1890 113.4 h3.6 v3.6" fill="none" stroke="#5c5c5c" stroke-width="0.9" /><path d="M1907.4 113.4 l5.2 5.2 M1912.6 113.4 l-5.2 5.2" fill="none" stroke="#7a7a7a" stroke-width="1" /><rect x="1886.5" y="733.5" width="9" height="9" rx="1.8" fill="#383838" stroke="#525252" stroke-width="1"/><rect x="1905.5" y="733.5" width="9" height="9" rx="1.8" fill="#383838" stroke="#525252" stroke-width="1"/><rect x="1888.6" y="736.6" width="4" height="4" fill="#2c2c2c" stroke="#666" stroke-width="0.9"/><path d="M1890 735.4 h3.6 v3.6" fill="none" stroke="#5c5c5c" stroke-width="0.9" /><path d="M1907.4 735.4 l5.2 5.2 M1912.6 735.4 l-5.2 5.2" fill="none" stroke="#7a7a7a" stroke-width="1" /><rect x="564" y="406" width="2" height="2" fill="#8e8e8e" rx="0" /><rect x="564" y="409" width="2" height="2" fill="#8e8e8e" rx="0" /><rect x="564" y="412" width="2" height="2" fill="#8e8e8e" rx="0" /><rect x="564" y="415" width="2" height="2" fill="#8e8e8e" rx="0" /><rect x="564" y="418" width="2" height="2" fill="#8e8e8e" rx="0" /><rect x="564" y="421" width="2" height="2" fill="#8e8e8e" rx="0" /><rect x="1576" y="406" width="2" height="2" fill="#8e8e8e" rx="0" /><rect x="1576" y="409" width="2" height="2" fill="#8e8e8e" rx="0" /><rect x="1576" y="412" width="2" height="2" fill="#8e8e8e" rx="0" /><rect x="1576" y="415" width="2" height="2" fill="#8e8e8e" rx="0" /><rect x="1576" y="418" width="2" height="2" fill="#8e8e8e" rx="0" /><rect x="1576" y="421" width="2" height="2" fill="#8e8e8e" rx="0" /><rect x="1689" y="406" width="2" height="2" fill="#8e8e8e" rx="0" /><rect x="1689" y="409" width="2" height="2" fill="#8e8e8e" rx="0" /><rect x="1689" y="412" width="2" height="2" fill="#8e8e8e" rx="0" /><rect x="1689" y="415" width="2" height="2" fill="#8e8e8e" rx="0" /><rect x="1689" y="418" width="2" height="2" fill="#8e8e8e" rx="0" /><rect x="1689" y="421" width="2" height="2" fill="#8e8e8e" rx="0" /><rect x="953" y="723" width="2" height="2" fill="#8e8e8e" rx="0" /><rect x="956" y="723" width="2" height="2" fill="#8e8e8e" rx="0" /><rect x="959" y="723" width="2" height="2" fill="#8e8e8e" rx="0" /><rect x="962" y="723" width="2" height="2" fill="#8e8e8e" rx="0" /><rect x="965" y="723" width="2" height="2" fill="#8e8e8e" rx="0" /><rect x="968" y="723" width="2" height="2" fill="#8e8e8e" rx="0" /><rect x="10.8" y="663.4" width="12.2" height="3" fill="#dcdcdc" rx="0" /><rect x="10.8" y="669.9" width="12.2" height="3" fill="#dcdcdc" rx="0" /><rect x="10.8" y="676.4" width="12.2" height="3" fill="#dcdcdc" rx="0" /><path d="M25.0 680.6999999999999 h6 l-3 3 z" fill="#b4b4b4" stroke="none" stroke-width="0" /><g transform="translate(50.4,663.2)"><path d="M1.6 8.4 V2.6 Q1.6 1.1 3.1 1.1 H3.4 Q3.7 0 5 0 H9.6 Q10.9 0 11.2 1.1 H18.4 Q19.9 1.1 19.9 2.6 V8.4 H18.3 V3.9 Q18.3 3.4 17.8 3.4 H3.7 Q3.2 3.4 3.2 3.9 V8.4 Z" fill="#dcdcdc" stroke="none" stroke-width="0" /><path d="M0 9.1 H21.6 L21 14.6 Q20.8 15.9 19.5 15.9 H2.1 Q0.8 15.9 0.6 14.6 Z" fill="#dcdcdc" stroke="none" stroke-width="0" /></g><path d="M101.9 661.8 h6.4 v6 h6 v6.3 h-6 v6 h-6.4 v-6 h-6.2 v-6.3 h6.2 z" fill="#dcdcdc" stroke="none" stroke-width="0" /><rect x="130.8" y="668" width="18.4" height="6.3" fill="#c6c6c6" rx="0" /><rect x="163" y="658.7" width="24" height="24.3" fill="#d0d0d0" rx="0" /><rect x="165.2" y="660.6" width="10.9" height="20.3" fill="#323232" rx="0" /><rect x="176" y="672.7" width="3.3" height="8.2" fill="#323232" rx="0" /><rect x="166.1" y="662.1" width="1.6" height="1.3" fill="#d0d0d0" rx="0" /><rect x="166.1" y="665" width="1.6" height="1.3" fill="#d0d0d0" rx="0" /><rect x="166.1" y="668.1" width="1.6" height="1.3" fill="#d0d0d0" rx="0" /><rect x="166.1" y="671.2" width="1.6" height="1.3" fill="#d0d0d0" rx="0" /><rect x="166.1" y="674" width="1.6" height="1.3" fill="#d0d0d0" rx="0" /><rect x="166.1" y="677.1" width="1.6" height="1.3" fill="#d0d0d0" rx="0" /><rect x="169.6" y="662" width="5.3" height="4.2" fill="#d0d0d0" rx="0" /><rect x="169.6" y="671.2" width="5.3" height="2.8" fill="#d0d0d0" rx="0" /><rect x="169.4" y="675.6" width="5.5" height="3.3" fill="#d0d0d0" rx="0" /><rect x="176.1" y="674" width="1.9" height="5.3" fill="#d0d0d0" rx="0" /><path d="M170.8 666.2 H178.3 V663.2 L185.3 668.5 L178.3 673.6 V670.6 H170.8 Z" fill="#323232" stroke="none" stroke-width="0" /><path d="M200.8 672.2 L206.6 678 L219.2 663.6" fill="none" stroke="#dcdcdc" stroke-width="4" /><rect x="243.6" y="660.3" width="21" height="21.2" fill="#e0e0e0" rx="0.8" /><rect x="246.75" y="663.4" width="14.4" height="1.5" fill="#323232" rx="0" /><rect x="246.75" y="666.8" width="14.4" height="11.9" fill="#323232" rx="0" /><rect x="248" y="668" width="1.6" height="1.6" fill="#e0e0e0" rx="0" /><rect x="251.1" y="668" width="4.7" height="1.6" fill="#e0e0e0" rx="0" /><rect x="257.4" y="668" width="3.7" height="1.6" fill="#e0e0e0" rx="0" /><rect x="248" y="671.2" width="1.6" height="1.6" fill="#e0e0e0" rx="0" /><rect x="251.1" y="671.2" width="4.7" height="1.6" fill="#e0e0e0" rx="0" /><rect x="257.4" y="671.2" width="3.7" height="1.6" fill="#e0e0e0" rx="0" /><rect x="248" y="674.1" width="1.6" height="1.6" fill="#e0e0e0" rx="0" /><rect x="251.1" y="674.1" width="4.7" height="1.6" fill="#e0e0e0" rx="0" /><rect x="257.4" y="674.1" width="3.7" height="1.6" fill="#e0e0e0" rx="0" /><rect x="248.2" y="677.2" width="1.8" height="1.5" fill="#e0e0e0" rx="0" /><rect x="256" y="677.2" width="1.4" height="1.5" fill="#e0e0e0" rx="0" /><rect x="280" y="663.7" width="3" height="3" fill="#dcdcdc" rx="0" /><rect x="286.5" y="663.7" width="11.7" height="3" fill="#dcdcdc" rx="0" /><rect x="280" y="669.6" width="3" height="3" fill="#dcdcdc" rx="0" /><rect x="286.5" y="669.6" width="11.7" height="3" fill="#dcdcdc" rx="0" /><rect x="280" y="675.6" width="3" height="3" fill="#dcdcdc" rx="0" /><rect x="286.5" y="675.6" width="11.7" height="3" fill="#dcdcdc" rx="0" /><rect x="313.3" y="660.9" width="6.3" height="6.1" fill="#e1ecf0" rx="0" /><rect x="313.3" y="668.1" width="6.3" height="6.1" fill="#e1ecf0" rx="0" /><rect x="313.3" y="675.6" width="6.3" height="6.1" fill="#e1ecf0" rx="0" /><rect x="321" y="660.9" width="6.3" height="6.1" fill="#e1ecf0" rx="0" /><rect x="321" y="668.1" width="6.3" height="6.1" fill="#e1ecf0" rx="0" /><rect x="321" y="675.6" width="6.3" height="6.1" fill="#e1ecf0" rx="0" /><rect x="328.6" y="660.9" width="6.3" height="6.1" fill="#e1ecf0" rx="0" /><rect x="328.6" y="668.1" width="6.3" height="6.1" fill="#e1ecf0" rx="0" /><rect x="328.6" y="675.6" width="6.3" height="6.1" fill="#e1ecf0" rx="0" /><path d="M576.7 618 h12.6 l-6.3 6.4 z" fill="#e4e4e4" stroke="none" stroke-width="0" /><path d="M668.6 667 l4 -4.4 l4 4.4 z" fill="#b8b8b8" stroke="none" stroke-width="0" /><path d="M668.8 671.6 h7.6 l-3.8 4 z" fill="#8a8a8a" stroke="none" stroke-width="0" /><rect x="928.9" y="663.1" width="4.4" height="11.9" fill="#d2d2d2" rx="0" /><path d="M933.3 669 L941.1 663.1 V675 Z" fill="#d2d2d2" stroke="none" stroke-width="0" /><path d="M960.9 669 L970.3 663.1 V675 Z M969.8 669 L979.2 663.1 V675 Z" fill="#d2d2d2" stroke="none" stroke-width="0" /><path d="M999.8 663.1 L1009.7 669 L999.8 675 Z" fill="#d2d2d2" stroke="none" stroke-width="0" /><path d="M1030.8 663.1 L1040.2 669 L1030.8 675 Z M1039.7 663.1 L1049.1 669 L1039.7 675 Z" fill="#d2d2d2" stroke="none" stroke-width="0" /><path d="M1068.7 663.1 L1076.5 669 L1068.7 675 Z" fill="#d2d2d2" stroke="none" stroke-width="0" /><rect x="1076.5" y="663.1" width="4.4" height="11.9" fill="#d2d2d2" rx="0" /><g transform="translate(1110.8,669.1) scale(1,1)"><path d="M-4.76 -5.67 A7.4 7.4 0 1 1 -4.35 5.99" fill="none" stroke="#dcdcdc" stroke-width="3.6" /><path d="M-7.9 -9.1 V-2.9 H-0.9 Z" fill="#dcdcdc" stroke="none" stroke-width="0" /></g><path d="M1128 667.6 h8 l-4 4 z" fill="#9a9a9a" stroke="none" stroke-width="0" /><rect x="1148.8" y="662.9" width="12.2" height="12.2" fill="#dcdcdc" rx="0.8" /><path d="M1145.8 659.9 h3.4 l-3.4 3.4 z" fill="#dcdcdc" stroke="none" stroke-width="0" /><path d="M1164.1 659.9 h-3.4 l3.4 3.4 z" fill="#dcdcdc" stroke="none" stroke-width="0" /><path d="M1145.8 678.1999999999999 h3.4 l-3.4 -3.4 z" fill="#dcdcdc" stroke="none" stroke-width="0" /><path d="M1164.1 678.1999999999999 h-3.4 l3.4 -3.4 z" fill="#dcdcdc" stroke="none" stroke-width="0" /><path d="M1172 667.6 h8 l-4 4 z" fill="#9a9a9a" stroke="none" stroke-width="0" /><rect x="1191.8" y="658" width="2.1" height="22" fill="#dcdcdc" rx="0" /><rect x="1188" y="660.4" width="22" height="1.9" fill="#dcdcdc" rx="0" /><rect x="1196.47" y="658" width="2.1" height="22" fill="#dcdcdc" rx="0" /><rect x="1188" y="664.87" width="22" height="1.9" fill="#dcdcdc" rx="0" /><rect x="1201.1399999999999" y="658" width="2.1" height="22" fill="#dcdcdc" rx="0" /><rect x="1188" y="669.34" width="22" height="1.9" fill="#dcdcdc" rx="0" /><rect x="1205.81" y="658" width="2.1" height="22" fill="#dcdcdc" rx="0" /><rect x="1188" y="673.81" width="22" height="1.9" fill="#dcdcdc" rx="0" /><path d="M1216 667.6 h8 l-4 4 z" fill="#9a9a9a" stroke="none" stroke-width="0" /><path d="M1234 666 H1237.4 L1243.6 661.8 V674.6 L1237.4 670.6 H1234 Z" fill="#dcdcdc" stroke="none" stroke-width="0" /><path d="M1245.57 665.34 A4 4 0 0 1 1245.57 671.46" fill="none" stroke="#dcdcdc" stroke-width="1.7" /><path d="M1247.89 662.58 A7.6 7.6 0 0 1 1247.89 674.22" fill="none" stroke="#dcdcdc" stroke-width="1.7" /><path d="M1250.20 659.82 A11.2 11.2 0 0 1 1250.20 676.98" fill="none" stroke="#dcdcdc" stroke-width="1.7" /><rect x="10.8" y="756.3" width="12.2" height="3" fill="#dcdcdc" rx="0" /><rect x="10.8" y="762.8" width="12.2" height="3" fill="#dcdcdc" rx="0" /><rect x="10.8" y="769.3" width="12.2" height="3" fill="#dcdcdc" rx="0" /><path d="M25.0 773.5999999999999 h6 l-3 3 z" fill="#b4b4b4" stroke="none" stroke-width="0" /><circle cx="69.6" cy="761.8" r="2.6" fill="none" stroke="#dcdcdc" stroke-width="1.4"/><circle cx="66.5" cy="769.7" r="2.6" fill="none" stroke="#dcdcdc" stroke-width="1.4"/><path d="M54.3 755.1 L58.7 755.8 L66.2 764 L64.2 765.6 L56.2 758 Z" fill="#dcdcdc" stroke="none" stroke-width="0" /><path d="M51.4 763.2 L63.5 762.5 L66.2 764.4 L64.4 766.3 L56.5 766.3 L52.8 765.3 Z" fill="#dcdcdc" stroke="none" stroke-width="0" /><path d="M65.4 764.6 L67.6 763.2 M65.2 765 L65.8 767.2" fill="none" stroke="#dcdcdc" stroke-width="1.4" /><path d="M87.7 758.2 H94.4 V764 H100 V773.1 H87.7 Z" fill="#dcdcdc" stroke="none" stroke-width="0" /><path d="M95.4 758.4 L99.8 763 H95.4 Z" fill="#dcdcdc" stroke="none" stroke-width="0" /><path d="M94.6 754.4 H100.6 V759.6 H106.4 V770 H101.2 V762.4 L95.6 756.8 H94.6 Z" fill="#dcdcdc" stroke="none" stroke-width="0" /><path d="M101.8 754.6 L106.2 758.6 H101.8 Z" fill="#dcdcdc" stroke="none" stroke-width="0" /><rect x="123.5" y="755.8" width="17" height="18" rx="2.6" fill="none" stroke="#dcdcdc" stroke-width="1.5"/><rect x="126.2" y="758" width="11.6" height="13.4" fill="#dcdcdc" rx="0.5" /><path d="M128.4 757.6 Q128.4 755 131 755 L132 753.6 L133 755 Q135.6 755 135.6 757.6 Z" fill="#dcdcdc" stroke="#323232" stroke-width="0.8" /><g transform="translate(166.8,754.8)"><path d="M3.1 0 H11.8 V6.2 H18.1 V18 H7.7 V16.5 H10.1 V11.2 H7.7 V8.1 H3.1 Z" fill="#dcdcdc" stroke="none" stroke-width="0" /><path d="M12.9 0 L18.1 5.2 H12.9 Z" fill="#dcdcdc" stroke="none" stroke-width="0" /><path d="M3.1 9 H6.8 V12.1 H9.3 V15.6 H6.8 V18.1 H3.1 V15.6 H0 V12.1 H3.1 Z" fill="#dcdcdc" stroke="none" stroke-width="0" /></g><path d="M184.6 773.7 h5.6 l-2.8 2.8 z" fill="#b4b4b4" stroke="none" stroke-width="0" /><path d="M207.79999999999998 754.8 h6.4 v6 h6 v6.3 h-6 v6 h-6.4 v-6 h-6.2 v-6.3 h6.2 z" fill="#dcdcdc" stroke="none" stroke-width="0" /><rect x="236.7" y="761" width="18.4" height="6.3" fill="#cfcfcf" rx="0" /><path d="M274 767.6 L281 760.6 L288 767.6" fill="none" stroke="#dcdcdc" stroke-width="2" /><path d="M308.8 760.4 L315.8 767.4 L322.8 760.4" fill="none" stroke="#dcdcdc" stroke-width="2" /><path d="M340.8 756.3 H349.7 V771.7 H340.8 V769.4 H346.4 V758.6 H340.8 Z" fill="#dcdcdc" stroke="none" stroke-width="0" /><path d="M361 756.3 H352 V771.7 H361 V769.4 H355.3 V758.6 H361 Z" fill="#dcdcdc" stroke="none" stroke-width="0" /><path d="M389.95000000000005 758.1 h11.3 v7 l-5.65 5.7 l-5.65 -5.7 z" fill="#dcdcdc" stroke="none" stroke-width="0" /><path d="M434.8 757 L428 764 L434.8 771" fill="none" stroke="#dcdcdc" stroke-width="2" /><path d="M462 757 L468.8 764 L462 771" fill="none" stroke="#dcdcdc" stroke-width="2" /><path d="M500.8 774.4 V762.2 A9.1 9.1 0 0 1 519 762.2 V774.4 H513.2 V762.6 A3.3 3.3 0 0 0 506.6 762.6 V774.4 Z" fill="#e4eef2" stroke="none" stroke-width="0" /><rect x="502.6" y="768.6" width="2" height="3.8" fill="#2f6a82" rx="0" /><rect x="515.2" y="768.6" width="2" height="3.8" fill="#2f6a82" rx="0" /><path d="M542 758.2 L534.4 764 L542 769.9 M548.2 758.2 L555.8 764 L548.2 769.9" fill="none" stroke="#dcdcdc" stroke-width="1.7" /><ellipse cx="545.1" cy="764" rx="5.9" ry="3.7" fill="#dcdcdc" stroke="#323232" stroke-width="0.8"/><circle cx="545.1" cy="764" r="2.4" fill="#323232" stroke="none" stroke-width="0"/><circle cx="545.1" cy="764" r="1.2" fill="#dcdcdc" stroke="none" stroke-width="0"/><circle cx="579.5" cy="763.8" r="9.7" fill="none" stroke="#dcdcdc" stroke-width="2.2"/><circle cx="579.5" cy="763.8" r="4.4" fill="none" stroke="#dcdcdc" stroke-width="3.5"/><circle cx="615.2" cy="763.8" r="9.7" fill="none" stroke="#dcdcdc" stroke-width="2.2"/><path d="M615.20 758.20 L615.20 769.40" fill="none" stroke="#dcdcdc" stroke-width="2.6" /><path d="M620.05 761.00 L610.35 766.60" fill="none" stroke="#dcdcdc" stroke-width="2.6" /><path d="M620.05 766.60 L610.35 761.00" fill="none" stroke="#dcdcdc" stroke-width="2.6" /><circle cx="649.4" cy="763.8" r="9.7" fill="none" stroke="#dcdcdc" stroke-width="2.2"/><path d="M643.8 758.2 h11.2 v6.4 l-5.6 6 l-5.6 -6 z" fill="#dcdcdc" stroke="none" stroke-width="0" /><circle cx="691.4" cy="760" r="6.1" fill="none" stroke="#dcdcdc" stroke-width="1.9"/><path d="M695.8 764.6 L699.4 768.2" fill="none" stroke="#dcdcdc" stroke-width="1.8" /><path d="M698.8 767.8 L703.6 772.6" fill="none" stroke="#dcdcdc" stroke-width="4.8" stroke-linecap="round"/><rect x="688.0" y="759.2" width="6.8" height="1.6" fill="#dcdcdc" rx="0" /><circle cx="929.3" cy="760" r="6.1" fill="none" stroke="#dcdcdc" stroke-width="1.9"/><path d="M933.6999999999999 764.6 L937.3 768.2" fill="none" stroke="#dcdcdc" stroke-width="1.8" /><path d="M936.6999999999999 767.8 L941.5 772.6" fill="none" stroke="#dcdcdc" stroke-width="4.8" stroke-linecap="round"/><rect x="925.9" y="759.2" width="6.8" height="1.6" fill="#dcdcdc" rx="0" /><rect x="928.5" y="756.6" width="1.6" height="6.8" fill="#dcdcdc" rx="0" /><rect x="961.9" y="757.8" width="12.2" height="12.2" fill="#dcdcdc" rx="0.8" /><path d="M958.9 754.8 h3.4 l-3.4 3.4 z" fill="#dcdcdc" stroke="none" stroke-width="0" /><path d="M977.1999999999999 754.8 h-3.4 l3.4 3.4 z" fill="#dcdcdc" stroke="none" stroke-width="0" /><path d="M958.9 773.0999999999999 h3.4 l-3.4 -3.4 z" fill="#dcdcdc" stroke="none" stroke-width="0" /><path d="M977.1999999999999 773.0999999999999 h-3.4 l3.4 -3.4 z" fill="#dcdcdc" stroke="none" stroke-width="0" /><rect x="1009" y="753.4" width="6.4" height="14.4" fill="#dcdcdc" rx="3.2" /><path d="M1006.8 762.4 V764.4 A5.4 5.4 0 0 0 1017.6 764.4 V762.4" fill="none" stroke="#dcdcdc" stroke-width="1.5" /><rect x="1011.4" y="769.6" width="1.6" height="3.6" fill="#dcdcdc" rx="0" /><rect x="1006" y="773" width="12.6" height="1.6" fill="#dcdcdc" rx="0" /></svg>
</div></body></html>
